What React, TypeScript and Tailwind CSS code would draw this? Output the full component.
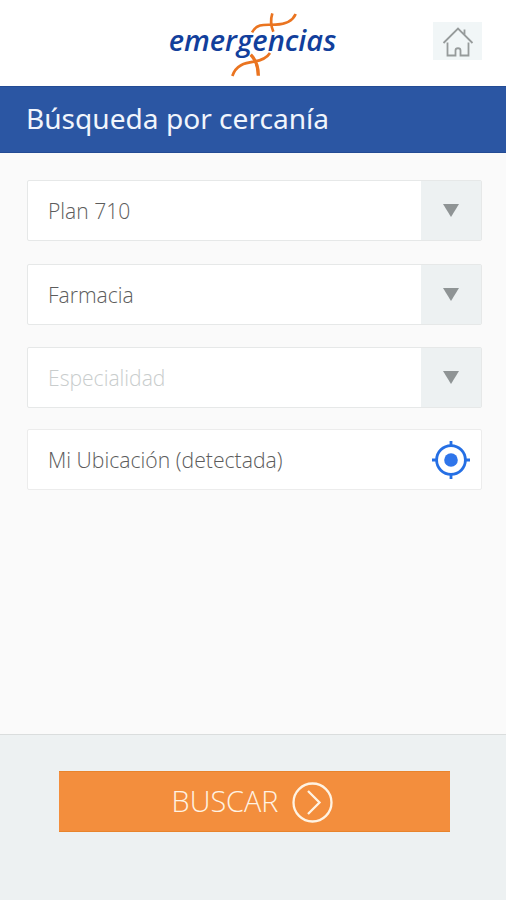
interface FieldProps {
  label: string;
  disabled?: boolean;
}

function Logo() {
  return (
    <svg width="185" height="80" viewBox="0 0 555 240" fill="none" className="overflow-visible">
      <text
        x="26"
        y="138"
        textLength="503"
        lengthAdjust="spacingAndGlyphs"
        className="font-['Open_Sans',sans-serif] text-[88px] font-semibold italic"
        fill="#123f9c"
      >
        emergencias
      </text>
      <g stroke="#fff" strokeWidth="14">
        <path d="M278 80C292 52 322 61 347 59C376 58 398 48 407 27" />
        <path d="M272 149C287 164 295 183 295 212" />
      </g>
      <g stroke="#ea7420" strokeWidth="8">
        <path d="M276 82C292 52 322 61 347 59C376 58 398 48 407 27" />
        <path d="M337 25C331 44 332 61 340 80" />
        <path d="M217 213C228 180 254 174 282 170C306 166 321 158 330 144" />
        <path d="M272 149C287 164 295 183 295 212" strokeWidth="10" />
      </g>
    </svg>
  );
}

function HomeIcon() {
  return (
    <svg width="32" height="32" viewBox="0 0 32 32" fill="none" stroke="#969b9b" strokeWidth="1.8">
      <path d="M1.5 18L16 3.5L30.5 18M22.5 9.5V4.5" />
      <path d="M5.5 17.5V30.5H13.5V25.5C13.5 22.5 18.5 22.5 18.5 25.5V30.5H26.5V17.5" />
    </svg>
  );
}

function TargetIcon() {
  return (
    <svg width="38" height="38" viewBox="0 0 38 38" fill="none" stroke="#256fe4" strokeWidth="2.8">
      <circle cx="19" cy="19" r="14.4" />
      <circle cx="19" cy="19" r="6.8" fill="#2f75ea" stroke="none" />
      <path d="M19 0V6M19 32V38M0 19H6M32 19H38" />
    </svg>
  );
}

function SelectField({ label, disabled }: FieldProps) {
  return (
    <button
      type="button"
      disabled={disabled}
      className="flex h-[61px] w-full rounded-xs border border-[#e6e8e8] bg-white text-left"
    >
      <span
        className={`flex h-full flex-1 items-center pl-5 text-[21.1px] font-light ${
          disabled ? 'text-[#c9cdcd]' : 'pt-px text-[#5c5c5c]'
        }`}
      >
        {label}
      </span>
      <span className="flex h-full w-[60px] items-center justify-center bg-[#edf1f2]">
        <svg width="16" height="13" viewBox="0 0 16 13" fill="#8f9495">
          <path d="M0 0H16L8 13Z" />
        </svg>
      </span>
    </button>
  );
}

export default function App() {
  return (
    <div className="flex h-[900px] w-[506px] flex-col overflow-hidden bg-[#fafafa] font-['Open_Sans',sans-serif]">
      <header className="flex h-[86px] shrink-0 items-start justify-between bg-white pr-6 pl-[160px]">
        <div className="pt-[5px]">
          <Logo />
        </div>
        <button type="button" className="mt-[22px] flex h-[38px] w-[49px] items-center justify-center bg-[#f1f6f7]">
          <HomeIcon />
        </button>
      </header>

      <div className="flex h-[67px] shrink-0 items-center border-y border-[#234b94] bg-[#2b56a3] pb-[3px] pl-[26px]">
        <h1 className="font-['Noto_Sans',sans-serif] text-[28.1px] whitespace-nowrap text-[#f1f5fc]">Búsqueda por cercanía</h1>
      </div>

      <main className="flex flex-1 flex-col px-6 pt-[27px] pl-[27px]">
        <div className="flex flex-col gap-[22.5px]">
          <SelectField label="Plan 710" />
          <SelectField label="Farmacia" />
          <SelectField label="Especialidad" disabled />
        </div>
        <div className="mt-[21px] flex h-[61px] items-center justify-between rounded-xs border border-[#ececec] bg-white pr-[11px] pl-5">
          <span className="text-[21.2px] font-light text-[#5c5c5c]">Mi Ubicación (detectada)</span>
          <TargetIcon />
        </div>
      </main>

      <footer className="h-[166px] shrink-0 border-t border-[#dadddd] bg-[#edf1f2] px-[59px] pt-9 pr-14">
        <button
          type="button"
          className="flex h-[61px] w-full items-center justify-center gap-[14px] border-y border-[#e8842c] bg-[#f38e3d] pr-1 text-[#fff3e3]"
        >
          <span className="pb-0.5 text-[28.8px] font-light">BUSCAR</span>
          <svg width="41" height="41" viewBox="0 0 41 41" fill="none" stroke="currentColor" strokeWidth="2.3" className="mt-px">
            <circle cx="20.5" cy="20.5" r="19" />
            <path d="M16 9L27.5 20.5L16 32" />
          </svg>
        </button>
      </footer>
    </div>
  );
}
